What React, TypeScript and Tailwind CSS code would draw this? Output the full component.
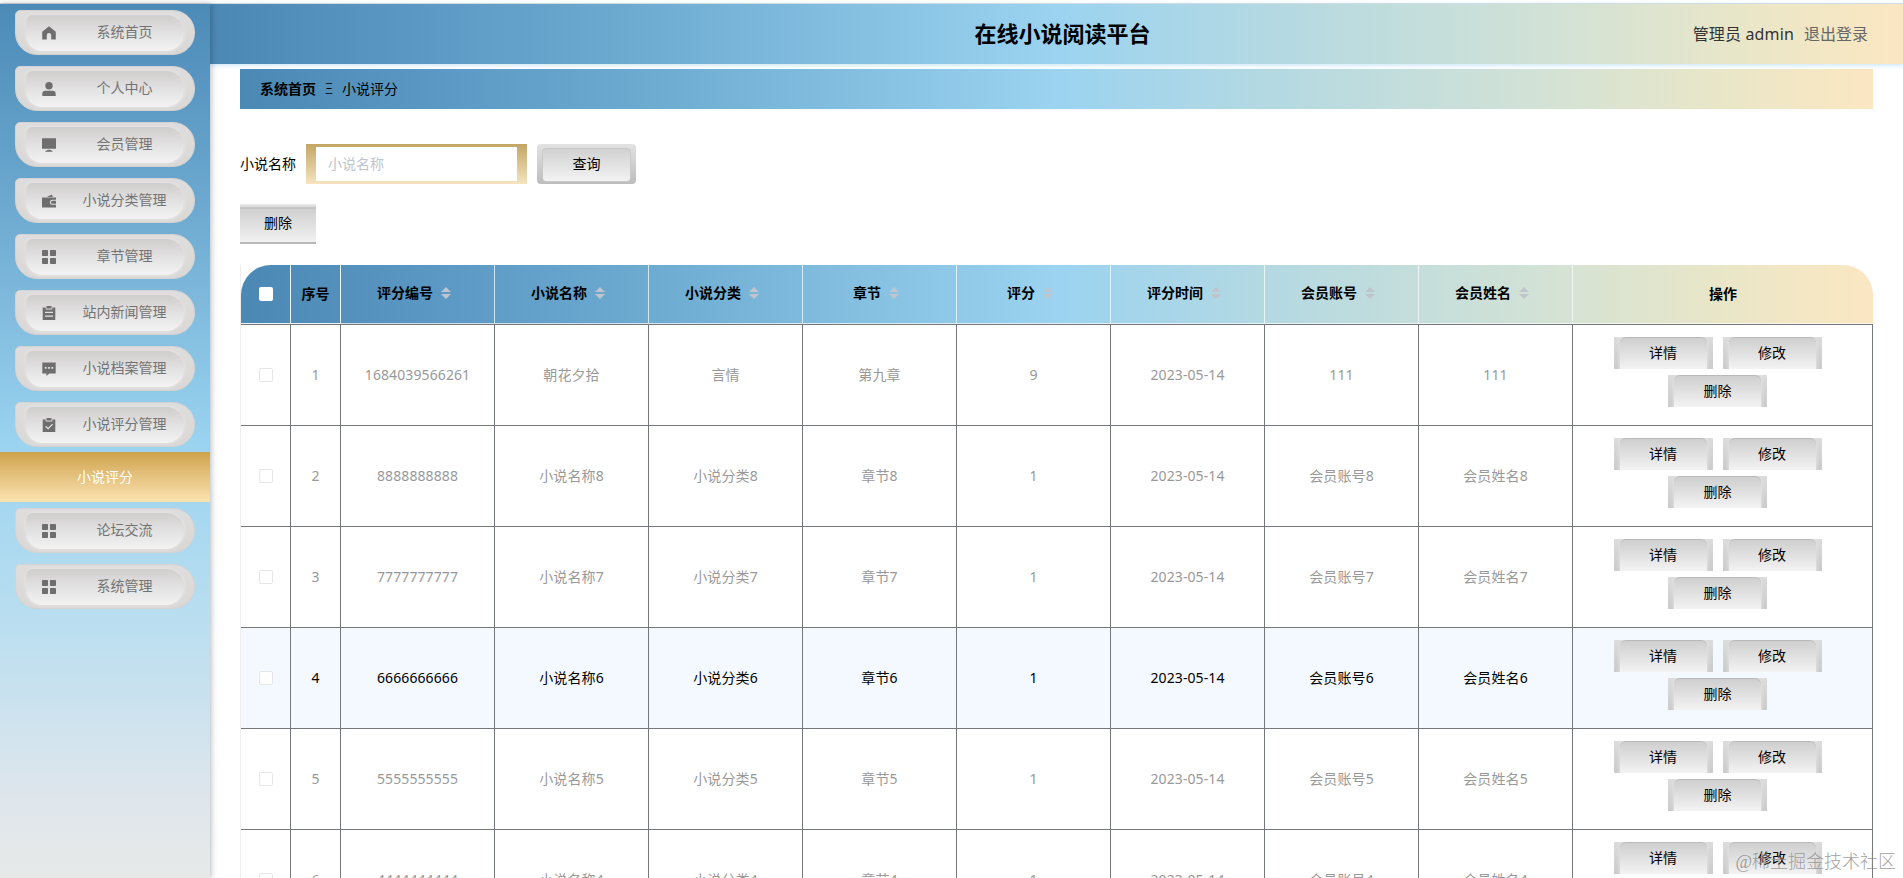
import React, { FC, ReactNode } from "react";
import clsx from "clsx";

interface IRating {
  id: number;
  code: string;
  name: string;
  category: string;
  chapter: string;
  score: string;
  date: string;
  account: string;
  member: string;
}

const ratings: IRating[] = [
  { id: 1, code: "1684039566261", name: "朝花夕拾", category: "言情", chapter: "第九章", score: "9", date: "2023-05-14", account: "111", member: "111" },
  { id: 2, code: "8888888888", name: "小说名称8", category: "小说分类8", chapter: "章节8", score: "1", date: "2023-05-14", account: "会员账号8", member: "会员姓名8" },
  { id: 3, code: "7777777777", name: "小说名称7", category: "小说分类7", chapter: "章节7", score: "1", date: "2023-05-14", account: "会员账号7", member: "会员姓名7" },
  { id: 4, code: "6666666666", name: "小说名称6", category: "小说分类6", chapter: "章节6", score: "1", date: "2023-05-14", account: "会员账号6", member: "会员姓名6" },
  { id: 5, code: "5555555555", name: "小说名称5", category: "小说分类5", chapter: "章节5", score: "1", date: "2023-05-14", account: "会员账号5", member: "会员姓名5" },
  { id: 6, code: "4444444444", name: "小说名称4", category: "小说分类4", chapter: "章节4", score: "1", date: "2023-05-14", account: "会员账号4", member: "会员姓名4" },
];

const columns = ["评分编号", "小说名称", "小说分类", "章节", "评分", "评分时间", "会员账号", "会员姓名"];
const gridCols = "grid grid-cols-[50px_50px_repeat(8,154px)_300px]";
const barGradient = "bg-[linear-gradient(90deg,#4b88b3_0%,#5b98c4_12%,#6dabd1_25%,#9bd3f0_50%,#b4d9e2_63%,#d3e2d5_80%,#e8e6c9_90%,#f6e7c3_97%,#fbe6c2_100%)]";

const icons: Record<string, ReactNode> = {
  home: <path d="M7 .3 .2 5.8V13.5h4.6V9.2a2.2 2.2 0 0 1 4.4 0v4.3h4.6V5.8z" />,
  user: (
    <>
      <circle cx="7" cy="3.7" r="3.7" />
      <path d="M.3 14v-2.4A3 3 0 0 1 3.2 8.8h7.6a3 3 0 0 1 2.9 2.8V14z" />
    </>
  ),
  monitor: <path d="M0 .3h14v10.5H0zM6 11.8h2l2.6 1.2v.8H3.400v-.8z" />,
  wallet: (
    <path
      fillRule="evenodd"
      d="M5 3 9.600.5l1.400 2.500zM0 3.500h14v2.300h-3.600a2.500 2.500 0 0 0 0 5H14v2.700H0zM10.400 6.800H14v3h-3.600a1.500 1.500 0 0 1 0-3z"
    />
  ),
  grid: (
    <>
      <rect width="6" height="6" rx=".8" />
      <rect x="8" width="6" height="6" rx=".8" />
      <rect y="8" width="6" height="6" rx=".8" />
      <rect x="8" y="8" width="6" height="6" rx=".8" />
    </>
  ),
  notes: <path fillRule="evenodd" d="M4.500 0h5v2.500h-5zM.7 1.500h3v2h6.600v-2h3V14H.7zM3 5.800v1.200h8V5.800zM3 9.600v1.200h8V9.600z" />,
  chat: (
    <path
      fillRule="evenodd"
      d="M.3.5h13.400v11H7.200L4.400 14v-2.500H.3zM2.800 5v1.800h1.800V5zM6.100 5v1.800h1.800V5zM9.400 5v1.800h1.800V5z"
    />
  ),
  check: (
    <>
      <path d="M4.500 0h5v2.500h-5zM.7 1.500h3v2h6.600v-2h3V14H.7z" />
      <path d="m3.600 8.300 2.500 2.400 4.500-4.500" fill="none" stroke="#e6e5e5" strokeWidth="1.200" />
    </>
  ),
};

interface IMenuItem {
  icon: string;
  label: string;
  child?: string;
}

const menu: IMenuItem[] = [
  { icon: "home", label: "系统首页" },
  { icon: "user", label: "个人中心" },
  { icon: "monitor", label: "会员管理" },
  { icon: "wallet", label: "小说分类管理" },
  { icon: "grid", label: "章节管理" },
  { icon: "notes", label: "站内新闻管理" },
  { icon: "chat", label: "小说档案管理" },
  { icon: "check", label: "小说评分管理", child: "小说评分" },
  { icon: "grid", label: "论坛交流" },
  { icon: "grid", label: "系统管理" },
];

const MenuItem: FC<IMenuItem> = ({ icon, label }) => (
  <div className="mx-[15px] flex h-[45px] items-center overflow-hidden rounded-[5px_22px_22px_22px] border border-[#d5d3d1] bg-linear-to-b from-[#dedddd] to-[#dad8d6] pb-[3px] pl-2.5 pr-2.5 pt-1">
    <div className="flex h-full w-full items-center rounded-[8px_20px_20px_18px] bg-linear-to-b from-[#d0cdcd] via-[#e3e2e2] to-[#f4f3f4] pl-4 shadow-[0_0_3px_1px_#e4e3e3]">
      <svg viewBox="0 0 14 14" className="size-3.5 shrink-0 fill-[#6e6e6e]">
        {icons[icon]}
      </svg>
      <span className="w-[137px] shrink-0 pb-0.5 text-center text-sm leading-5 text-[#737373]">{label}</span>
    </div>
  </div>
);

const Sidebar: FC = () => (
  <aside className="relative z-10 h-full w-[210px] shrink-0 bg-[linear-gradient(180deg,#4c8bb8_0%,#6eaad1_24%,#9ad3f0_50%,#bcdff0_72%,#dfe6ec_91%,#e6e9e8_100%)] shadow-[1px_0_6px_rgba(0,21,41,0.3)]">
    <nav className="flex flex-col gap-[11px] pt-1.5">
      {menu.map((item) => (
        <div key={item.label}>
          <MenuItem {...item} />
          {item.child && (
            <div className="-mb-[5px] mt-[5px] flex h-[50px] items-center justify-center bg-linear-to-b from-[#cfa34c] to-[#fce3b0] text-sm text-white">
              {item.child}
            </div>
          )}
        </div>
      ))}
    </nav>
  </aside>
);

const RowButton: FC<{ children: ReactNode }> = ({ children }) => (
  <button className="h-8 w-[99px] overflow-hidden bg-linear-to-b from-[#dcdcdc] to-[#cbcbcb] px-1.5 text-sm text-black">
    <span className="flex h-full items-center justify-center rounded-t-md border-t border-[#b9b9b9] bg-linear-to-b from-[#d0cfcf] to-[#f3f3f3] pb-0.5 shadow-[0_0_3px_1px_#e0e0e0]">
      {children}
    </span>
  </button>
);

const SortIcon: FC = () => (
  <svg viewBox="0 0 10 12" className="ml-2 h-3 w-2.5 fill-[#c0c4cc]">
    <path d="M5 0l5 5H0zM5 12l5-5H0z" />
  </svg>
);

const TableHead: FC = () => (
  <div className={clsx(gridCols, barGradient, "h-[59px] rounded-t-[30px] text-sm font-bold text-black")}>
    <div className="flex items-center justify-center border-b border-r border-white/90">
      <span className="size-3.5 rounded-[2px] bg-white" />
    </div>
    <div className="flex items-center justify-center border-b border-r border-white/90">序号</div>
    {columns.map((col) => (
      <div key={col} className="flex items-center justify-center border-b border-r border-white/70 pb-0.5 pr-[7px]">
        {col}
        <SortIcon />
      </div>
    ))}
    <div className="flex items-center justify-center border-b border-white/70">操作</div>
  </div>
);

const TableRow: FC<{ row: IRating; active: boolean }> = ({ row, active }) => {
  const { id, code, name, category, chapter, score, date, account, member } = row;
  return (
    <div
      className={clsx(
        gridCols,
        "h-[101px] text-sm",
        active ? "bg-[#f4f9ff] text-black" : "text-[#999]"
      )}
    >
      <div className="flex items-center justify-center border-b border-r border-[#74777b]">
        <span className="size-3.5 rounded-[2px] border border-[#e6e6e6] bg-white" />
      </div>
      {[id, code, name, category, chapter, score, date, account, member].map((value, index) => (
        <div key={index} className="flex items-center justify-center border-b border-r border-[#74777b] tracking-[0.1px]">
          {value}
        </div>
      ))}
      <div className="flex flex-wrap content-start justify-center gap-x-2.5 gap-y-1.5 border-b border-r border-[#74777b] pl-[39px] pr-[49px] pt-3">
        <RowButton>详情</RowButton>
        <RowButton>修改</RowButton>
        <RowButton>删除</RowButton>
      </div>
    </div>
  );
};

const App: FC = () => {
  return (
    <div className="relative flex h-[878px] w-[1903px] flex-col overflow-hidden bg-white font-['Noto_Sans','Noto_Sans_CJK_SC',sans-serif]">
      <div className="h-1 shrink-0 border-b border-[#d8dadc]" />
      <div className="flex min-h-0 flex-1">
        <Sidebar />
        <div className="min-w-0 flex-1">
          <header className={clsx(barGradient, "grid h-[60px] grid-cols-[1fr_auto_1fr] items-center pr-[34px] shadow-[0_1px_5px_#bfe3f5]")}>
            <span />
            <h1 className="pb-0.5 pl-[46px] text-[22px] font-bold text-black">在线小说阅读平台</h1>
            <div className="flex justify-end gap-2.5 pr-px text-base text-[#333]">
              <span className="tracking-[0.15px]">管理员 admin</span>
              <a className="text-[#666]">退出登录</a>
            </div>
          </header>
          <main className="px-[30px] pt-[5px]">
            <div className={clsx(barGradient, "flex h-10 items-center px-5 text-sm text-black")}>
              <b>系统首页</b>
              <span className="w-[26px] text-center font-light">Ξ</span>
              <span>小说评分</span>
            </div>
            <div className="mt-[35px] flex h-10 items-center text-sm text-black">
              <label className="w-[66px]">小说名称</label>
              <div className="h-10 w-[221px] bg-linear-to-b from-[#c3a662] to-[#f4e4bf] px-2.5 py-[3px]">
                <input className="h-full w-full bg-white px-3 pb-0.5 text-sm outline-none placeholder:text-[#c0c4cc]" placeholder="小说名称" />
              </div>
              <button className="ml-2.5 h-10 w-[99px] rounded bg-linear-to-b from-[#e2e2e2] to-[#bdbdbd] px-[5px] pb-0.5 pt-1">
                <span className="flex h-full items-center justify-center rounded border border-[#c9c9c9] bg-linear-to-b from-[#d2d1d1] to-[#f3f3f3] pb-0.5">查询</span>
              </button>
            </div>
            <button className="mt-5 block h-10 w-[76px] border-b-2 border-[#b8b8b8] bg-[linear-gradient(180deg,#ececec_0,#d8d8d8_3px,#b5b5b5_4px,#d0d0d0_5px,#f1f1f1_100%)] text-sm text-black">
              删除
            </button>
            <div className="mt-[21px] w-[1633px] border-l border-[#eee]">
              <TableHead />
              <div className="border-t border-[#74777b]">
                {ratings.map((row) => (
                  <TableRow key={row.id} row={row} active={row.id === 4} />
                ))}
              </div>
            </div>
          </main>
        </div>
      </div>
      <div className="absolute bottom-1 right-[7px] font-['Liberation_Serif','Noto_Sans_CJK_SC',serif] text-lg font-light leading-6 text-[#888]/80">
        @稀土掘金技术社区
      </div>
    </div>
  );
};

export default App;
